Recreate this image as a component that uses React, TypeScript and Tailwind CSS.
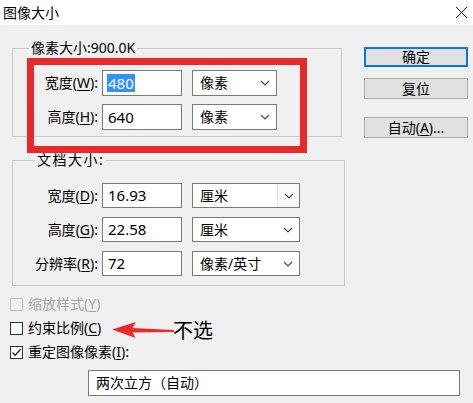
import React from 'react'

const font = "font-['Noto_Sans','Noto_Sans_CJK_SC',sans-serif]"

function Key({ k }: { k: string }) {
  return (
    <>
      (<span className="underline underline-offset-2">{k}</span>)
    </>
  )
}

function Chevron() {
  return (
    <svg width="10" height="6" viewBox="0 0 10 6" className="shrink-0">
      <path d="M1 1 L5 5 L9 1" fill="none" stroke="#4a4a4a" strokeWidth="1.2" />
    </svg>
  )
}

function Select({ value, w, split }: { value: string; w: string; split?: boolean }) {
  return (
    <div className={`${w} h-full bg-white border border-[#7a7a7a] flex items-center justify-between pl-[7px] text-[14px]`}>
      <span className="leading-none">{value}</span>
      <div className={`h-full flex items-center justify-center w-[22px] ${split ? 'border-l border-[#e3e3e3] bg-[#f7f9fa]' : ''}`}>
        <Chevron />
      </div>
    </div>
  )
}

function Row({
  label,
  k,
  value,
  unit,
  selW,
  h,
  selected,
  split,
}: {
  label: string
  k: string
  value: string
  unit: string
  selW: string
  h: string
  selected?: boolean
  split?: boolean
}) {
  return (
    <div className={`flex items-center ${h}`}>
      <div className="w-[89px] text-right text-[14px] leading-none pr-[4px] whitespace-nowrap">
        {label}
        <Key k={k} />:
      </div>
      <div className="w-[80px] h-full bg-white border border-[#7a7a7a] flex items-center pl-[4px] text-[15px]">
        {selected ? (
          <span className="bg-[#3390ff] text-white leading-[18px] px-[1px]">{value}</span>
        ) : (
          <span className="leading-none px-[1px]">{value}</span>
        )}
      </div>
      <div className="w-[10px]" />
      <Select value={unit} w={selW} split={split} />
    </div>
  )
}

function Group({ title, w, h, pt, gap, children, tracking }: {
  title: string
  w: string
  h: string
  pt: string
  gap: string
  children: React.ReactNode
  tracking?: string
}) {
  return (
    <div className={`relative border border-[#c9c9c9] ${w} ${h} ${pt}`}>
      <span className={`absolute left-[16px] -top-[11px] bg-[#f0f0f0] px-[2px] text-[14px] leading-[20px] ${tracking ?? ''}`}>
        {title}
      </span>
      <div className={`flex flex-col ${gap}`}>{children}</div>
    </div>
  )
}

function Check({ label, k, checked, disabled, suffix }: {
  label: string
  k: string
  checked?: boolean
  disabled?: boolean
  suffix?: string
}) {
  return (
    <div className="flex items-center h-[24px]">
      <div
        className={`w-[13px] h-[13px] border flex items-center justify-center ${
          disabled ? 'border-[#c4c4c4] bg-[#f0f0f0]' : 'border-[#333] bg-white'
        }`}
      >
        {checked && (
          <svg width="11" height="11" viewBox="0 0 11 11">
            <path d="M1.5 5.5 L4.2 8.3 L9.6 2.2" fill="none" stroke="#222" strokeWidth="1.3" />
          </svg>
        )}
      </div>
      <span className={`ml-[5px] text-[14px] leading-none ${disabled ? 'text-[#a6a6a6]' : ''}`}>
        {label}
        <Key k={k} />
        {suffix}
      </span>
    </div>
  )
}

function Button({ children, focus, cls }: { children: React.ReactNode; focus?: boolean; cls: string }) {
  return (
    <div
      className={`w-[104px] h-[20px] bg-[#e1e1e1] flex items-center justify-center text-[14px] leading-none ${cls} ${
        focus ? 'border-2 border-[#0a78d4]' : 'border border-[#adadad]'
      }`}
    >
      {children}
    </div>
  )
}

export default function App() {
  return (
    <div className={`relative w-[473px] h-[403px] overflow-hidden bg-[#f0f0f0] text-black ${font}`}>
      {/* title bar */}
      <div className="h-[25px] bg-white flex items-center justify-between pl-[3px] pr-[4px]">
        <span className="text-[14px] leading-none">图像大小</span>
        <svg width="13" height="13" viewBox="0 0 13 13" className="mr-[1px]">
          <path d="M1 1 L12 12 M12 1 L1 12" stroke="#111" strokeWidth="1" />
        </svg>
      </div>

      <div className="flex">
        {/* left column */}
        <div className="ml-[12px] pt-[23px]">
          <Group title="像素大小:900.0K" w="w-[330px]" h="h-[89px]" pt="pt-[21px]" gap="gap-[8px]">
            <Row label="宽度" k="W" value="480" unit="像素" selW="w-[85px]" h="h-[26px]" selected />
            <Row label="高度" k="H" value="640" unit="像素" selW="w-[85px]" h="h-[26px]" />
          </Group>

          <div className="h-[23px]" />

          <Group title="文档大小:" w="w-[333px]" h="h-[126px]" pt="pt-[22px]" gap="gap-[9px]" tracking="tracking-[1.5px] left-[22px]">
            <Row label="宽度" k="D" value="16.93" unit="厘米" selW="w-[108px]" h="h-[25px]" split />
            <Row label="高度" k="G" value="22.58" unit="厘米" selW="w-[108px]" h="h-[25px]" />
            <Row label="分辨率" k="R" value="72" unit="像素/英寸" selW="w-[108px]" h="h-[25px]" />
          </Group>
        </div>

        {/* buttons */}
        <div className="ml-[19px] pt-[22px] flex flex-col">
          <Button focus cls="">确定</Button>
          <Button cls="mt-[11px] h-[21px]">复位</Button>
          <Button cls="mt-[18px] h-[21px]">
            自动<Key k="A" />...
          </Button>
        </div>
      </div>

      {/* checkboxes */}
      <div className="pl-[10px] pt-[6px] flex flex-col">
        <Check label="缩放样式" k="Y" disabled />
        <Check label="约束比例" k="C" />
        <Check label="重定图像像素" k="I" checked suffix=":" />
      </div>

      <div className="ml-[88px] mt-[6px] w-[372px] h-[26px] bg-white border border-[#7a7a7a] flex items-center pl-[7px] text-[14px] leading-none">
        两次立方（自动）
      </div>

      {/* red annotation box */}
      <div className="absolute left-[27px] top-[58px] w-[280px] h-[95px] border-[7px] border-[#e9282b] pointer-events-none" />

      {/* red arrow annotation */}
      <svg className="absolute left-[110px] top-[320px]" width="66" height="20" viewBox="0 0 66 20">
        <path d="M2 9.5 L26 2 L22.5 8 L64 10 L64 12 L22.5 12.5 L25.5 18 Z" fill="#ea2a2c" />
      </svg>
      <span className="absolute left-[173px] top-[321px] text-[20px] leading-none">不选</span>
    </div>
  )
}
